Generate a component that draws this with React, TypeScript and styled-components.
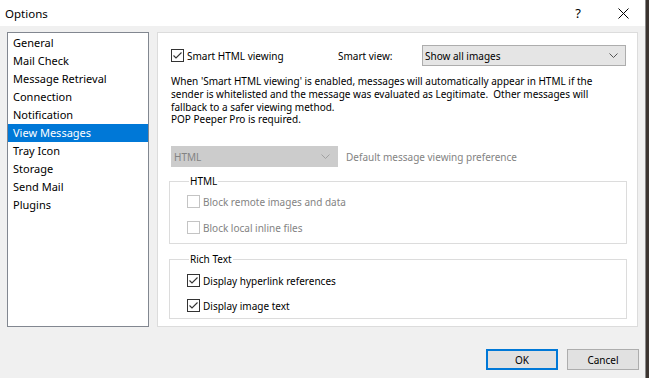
import React from 'react';
import styled, { createGlobalStyle } from 'styled-components';

const GlobalStyle = createGlobalStyle`
  html, body {
    margin: 0;
    padding: 0;
    background: #3b3430;
  }
  body {
    font-family: 'Noto Sans', 'Segoe UI', sans-serif;
    font-size: 10px;
    color: #000;
  }
`;

const pages = [
  'General',
  'Mail Check',
  'Message Retrieval',
  'Connection',
  'Notification',
  'View Messages',
  'Tray Icon',
  'Storage',
  'Send Mail',
  'Plugins',
];

const Window = styled.div`
  width: 645px;
  height: 378px;
  display: flex;
  flex-direction: column;
  background: #f0f0f0;
  border-right: 1px solid #8a8a8a;
`;

const TitleBar = styled.div`
  height: 26px;
  flex: none;
  display: flex;
  align-items: center;
  background: #fff;
  padding-left: 5px;
`;

const Title = styled.div`
  flex: 1;
  font-size: 11.5px;
`;

const TitleButton = styled.div<{ $width: number }>`
  width: ${(p) => p.$width}px;
  height: 26px;
  display: flex;
  align-items: center;
  justify-content: center;
  font-size: 13px;
`;

const Body = styled.div`
  display: flex;
  gap: 8px;
  padding: 6px 0 0 7px;
`;

const ListBox = styled.ul`
  list-style: none;
  margin: 0;
  padding: 1px 0 0;
  width: 142px;
  height: 295px;
  flex: none;
  box-sizing: border-box;
  border: 1px solid #828790;
  background: #fff;
  font-size: 11px;
`;

const ListItem = styled.li<{ $selected?: boolean }>`
  height: 18px;
  line-height: 18px;
  padding-left: 5px;
  background: ${(p) => (p.$selected ? '#0078d7' : 'transparent')};
  color: ${(p) => (p.$selected ? '#fff' : '#000')};
  white-space: nowrap;
`;

const Panel = styled.div`
  width: 481px;
  height: 295px;
  flex: none;
  box-sizing: border-box;
  border: 1px solid #dcdcdc;
  background: #fff;
  padding: 12px 10px 0 13px;
`;

const TopRow = styled.div`
  display: flex;
  align-items: center;
  height: 21px;
`;

const SmartLabel = styled.span`
  flex: none;
  width: 84px;
`;

const Combo = styled.div<{ $width: number; $disabled?: boolean }>`
  width: ${(p) => p.$width}px;
  height: 21px;
  flex: none;
  box-sizing: border-box;
  display: flex;
  align-items: center;
  justify-content: space-between;
  padding: 0 7px 0 2px;
  border: 1px solid ${(p) => (p.$disabled ? '#cccccc' : '#adadad')};
  background: ${(p) => (p.$disabled ? '#cccccc' : '#e5e5e5')};
  color: ${(p) => (p.$disabled ? '#838383' : '#000')};
`;

const Description = styled.p`
  margin: 9px 0 0;
  line-height: 12.75px;
  white-space: nowrap;
`;

const PrefRow = styled.div`
  display: flex;
  align-items: center;
  gap: 8px;
  margin-top: 20px;
`;

const Muted = styled.span`
  color: #838383;
`;

const Group = styled.fieldset<{ $top: number; $height: number }>`
  margin: ${(p) => p.$top}px 0 0 -2px;
  width: 458px;
  height: ${(p) => p.$height}px;
  box-sizing: border-box;
  border: 1px solid #dcdcdc;
  padding: 0 0 0 17px;
`;

const Legend = styled.legend`
  margin-left: 2px;
  padding: 0 1px;
  height: 14px;
  line-height: 14px;
`;

const CheckRow = styled.div<{ $disabled?: boolean; $gap: number }>`
  display: flex;
  align-items: center;
  gap: 3px;
  margin-top: ${(p) => p.$gap}px;
  height: 13px;
  color: ${(p) => (p.$disabled ? '#838383' : '#000')};
`;

const SmartCheck = styled(CheckRow)`
  flex: none;
  width: 167px;
`;

const Box = styled.span<{ $disabled?: boolean }>`
  width: 13px;
  height: 13px;
  flex: none;
  box-sizing: border-box;
  border: 1px solid ${(p) => (p.$disabled ? '#c4c4c4' : '#333')};
  background: #fff;
  display: flex;
  align-items: center;
  justify-content: center;
`;

const Footer = styled.div`
  display: flex;
  justify-content: flex-end;
  gap: 9px;
  padding: 22px 6px 0 0;
`;

const Button = styled.button<{ $default?: boolean }>`
  width: 72px;
  height: 21px;
  box-sizing: border-box;
  font: inherit;
  color: #000;
  background: #e1e1e1;
  border: ${(p) => (p.$default ? '2px solid #0078d7' : '1px solid #adadad')};
  padding: 0;
`;

const Check = () => (
  <svg width="11" height="11" viewBox="0 0 11 11">
    <path d="M1.5 5.5 L4 8 L9.5 2.5" fill="none" stroke="#333" strokeWidth="1.1" />
  </svg>
);

const Chevron = ({ color }: { color: string }) => (
  <svg width="9" height="5" viewBox="0 0 9 5">
    <path d="M0.5 0.5 L4.5 4.5 L8.5 0.5" fill="none" stroke={color} strokeWidth="1" />
  </svg>
);

const CheckBox = ({
  label,
  checked,
  disabled,
  gap,
}: {
  label: string;
  checked?: boolean;
  disabled?: boolean;
  gap: number;
}) => (
  <CheckRow $disabled={disabled} $gap={gap}>
    <Box $disabled={disabled}>{checked && <Check />}</Box>
    {label}
  </CheckRow>
);

export default function App() {
  return (
    <>
      <GlobalStyle />
      <Window>
        <TitleBar>
          <Title>Options</Title>
          <TitleButton $width={46}>?</TitleButton>
          <TitleButton $width={44}>
            <svg width="11" height="11" viewBox="0 0 11 11">
              <path d="M0.5 0.5 L10.5 10.5 M10.5 0.5 L0.5 10.5" stroke="#000" strokeWidth="1" />
            </svg>
          </TitleButton>
        </TitleBar>
        <Body>
          <ListBox>
            {pages.map((p) => (
              <ListItem key={p} $selected={p === 'View Messages'}>
                {p}
              </ListItem>
            ))}
          </ListBox>
          <Panel>
            <TopRow>
              <SmartCheck $gap={0}>
                <Box>
                  <Check />
                </Box>
                Smart HTML viewing
              </SmartCheck>
              <SmartLabel>Smart view:</SmartLabel>
              <Combo $width={204}>
                Show all images
                <Chevron color="#555" />
              </Combo>
            </TopRow>
            <Description>
              When 'Smart HTML viewing' is enabled, messages will automatically appear in HTML if the
              <br />
              sender is whitelisted and the message was evaluated as Legitimate.&nbsp; Other messages will
              <br />
              fallback to a safer viewing method.
              <br />
              POP Peeper Pro is required.
            </Description>
            <PrefRow>
              <Combo $width={167} $disabled>
                HTML
                <Chevron color="#a0a0a0" />
              </Combo>
              <Muted>Default message viewing preference</Muted>
            </PrefRow>
            <Group $top={7} $height={70}>
              <Legend>HTML</Legend>
              <CheckBox label="Block remote images and data" disabled gap={7} />
              <CheckBox label="Block local inline files" disabled gap={13} />
            </Group>
            <Group $top={8} $height={67}>
              <Legend>Rich Text</Legend>
              <CheckBox label="Display hyperlink references" checked gap={8} />
              <CheckBox label="Display image text" checked gap={12} />
            </Group>
          </Panel>
        </Body>
        <Footer>
          <Button $default>OK</Button>
          <Button>Cancel</Button>
        </Footer>
      </Window>
    </>
  );
}
